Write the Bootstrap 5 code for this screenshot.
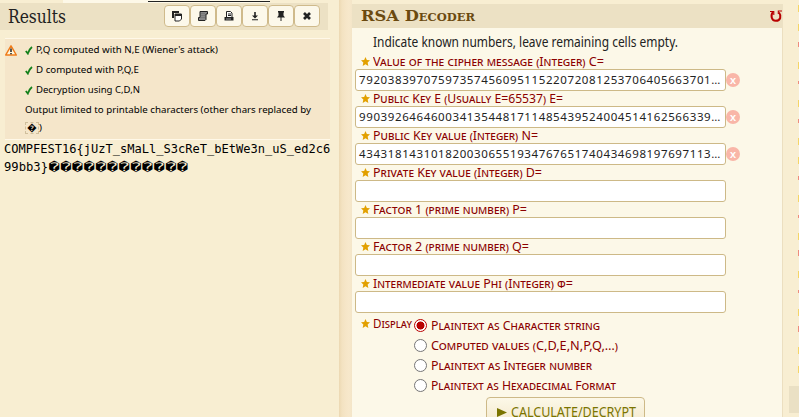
<!DOCTYPE html>
<html lang="en">
<head>
<meta charset="utf-8">
<title>RSA Decoder</title>
<link href="https://cdn.jsdelivr.net/npm/bootstrap@5.3.0/dist/css/bootstrap.min.css" rel="stylesheet">
<style>
body{width:799px;height:417px;background:#f8eed2;font-family:"Noto Sans","Open Sans",sans-serif;color:#222;line-height:1}
.fit{display:inline-block;white-space:nowrap;transform-origin:0 50%}
.side{width:339px;height:417px}
.topstrip{height:3px;margin-left:63px;width:207px;background:#fdf8e8;padding-top:1px}
.topstrip div{height:1px;width:122px;margin-left:85px;background:#222}
.res-head{width:328px;height:27px;background:#ece1c4;padding-left:8px}
.res-title{font:19px/27px "DejaVu Serif",serif;width:156px}
.tool{width:26px;height:22px;border:1px solid #cfba8b;border-radius:4px;background:#fcf8ea;padding:0;color:#222}
.tools{margin-top:2px}
.tool svg{display:block;margin:auto}
.notes{margin:8px 0 0 5px;width:325px;height:102px;background:#f5e6ca;border-top:1px solid #fff8e8;border-bottom:1px solid #fff8e8;font-size:9.8px;color:#000}
.notes svg.warn{margin:6px 0 0 0}
.note{height:20px;line-height:20px}
.note-list{padding:1px 0 0 8px}
.tick{width:11px;height:20px}
.tick svg{display:block}
.bad{border:1px dashed #d0bf9c;width:14px;height:12px}
.bad-row{padding-top:2px}
.result{font:12.05px/18px "DejaVu Sans Mono",monospace;color:#000;padding-left:4px}
.gutter{width:13px;height:417px;background:linear-gradient(90deg,#ecd8b2 0,#f3e2c1 3px,#f6e6c8 7px,#f7e8cb 10px,#f3e5c8 13px)}
.main{width:431px;height:417px}
.main-head{margin-top:4px;height:24px;background:#ece1c4;padding-left:9px}
.main-title{font:bold 15.6px/24px "DejaVu Serif",serif;font-variant:small-caps;color:#6b4a10;width:408px}
.panel{height:389px;background:#fcf8e8;border-right:1px solid #ecdfc0;padding-left:3px}
.lead-in{height:26px;line-height:28px;font-size:14px;padding-left:18px}
.lab{height:15px;line-height:15px;font-size:13px;font-variant:small-caps;color:#8b0000;padding-left:6px}
.lab svg{width:9px;height:9px;margin-right:3px;flex:none}
.field{width:371px;height:22px;border:1px solid #cdb987;border-radius:3px;background:#fff;padding-left:3px;font-size:11.5px;line-height:19px;white-space:nowrap}
.clear{width:14px;height:14px;border-radius:50%;background:#f9b6a8;color:#fff;font-weight:bold;font-size:9px}
.opts{height:82px}
.display-lab{width:59px;margin-top:3px}
.choices{padding-top:2px}
.dot{width:13px;height:13px;border:1px solid #767676;border-radius:50%;background:#fff;margin-right:4px;flex:none}
.dot.on{border:1.5px solid #b80000;background:radial-gradient(circle,#b80000 0 3.7px,#fff 4.3px)}
.choice{height:20px;font-size:13px;font-variant:small-caps;color:#8b0000}
.go{margin:2px 0 0 131px;width:159px;height:29px;border:1px solid #cdb987;border-radius:4px;background:linear-gradient(#fcf8e8,#f3e8cb);color:#7a7400;font-size:14px;padding:1px 0 0 10px}
.edge{width:16px;height:417px}
</style>
</head>
<body class="overflow-hidden">
<svg class="d-none"><symbol id="star" viewBox="0 0 20 20"><path fill="#e2a000" d="M10 0l3 6.500 7 .8-5.200 4.900L16.300 20 10 16.300 3.700 20l1.500-7.800L0 7.300l7-.8z"/></symbol>
<symbol id="check" viewBox="0 0 8 9"><path d="M.8 5l2 2.500Q4 3.500 7 1" fill="none" stroke="#13801b" stroke-width="1.800"/></symbol></svg>
<div class="d-flex">
<section class="side">
 <div class="topstrip"><div></div></div>
 <header class="res-head d-flex">
  <div class="res-title"><span class="fit" data-w="58">Results</span></div>
  <div class="tools d-flex">
   <button class="tool"><svg width="12" height="12" viewBox="0 0 12 12"><path d="M1 1h7v2H3v5H1z" fill="#222"/><path d="M4 4h6.500v5l-2 2H4z" fill="#fff" stroke="#222"/><path d="M4 4h7v2H4z" fill="#222"/></svg></button>
   <button class="tool"><svg width="12" height="12" viewBox="0 0 12 12"><path d="M3 1.500h7.500v2.500H9v5.500L8 10.500H1.500v-3H3z" fill="#888" stroke="#222"/><path d="M4 3.500h4M4 5.500h4M4 7.500h4" stroke="#777"/></svg></button>
   <button class="tool"><svg width="12" height="12" viewBox="0 0 12 12"><path d="M3.500 7V1.500h4l1.500 1.500v4" fill="#fff" stroke="#222"/><path d="M5 4h3M5 5.500h3" stroke="#222"/><path d="M1.500 7h9v3.500h-9z" fill="#222"/><path d="M3 9h5" stroke="#ccc" stroke-width=".7"/></svg></button>
   <button class="tool"><svg width="12" height="12" viewBox="0 0 12 12"><path d="M5.200 2h1.600v3.500H9L6 8.500 3 5.500h2.200zM3 9.300h6v1H3z" fill="#222"/></svg></button>
   <button class="tool"><svg width="12" height="12" viewBox="0 0 12 12"><path d="M3 1h6v1.500H8.500v3L10 7.500H6.500V11h-1V7.500H2l1.500-2v-3H3z" fill="#222"/></svg></button>
   <button class="tool"><svg width="12" height="12" viewBox="0 0 12 12"><path d="M3 3l6 6M9 3l-6 6" stroke="#222" stroke-width="2.700"/></svg></button>
  </div>
 </header>
 <div class="notes d-flex">
  <svg class="warn" width="12" height="11" viewBox="0 0 12 11"><path d="M6 .8L11.300 10H.7z" fill="#fff7dc" stroke="#ef7c1a" stroke-width="1.500" stroke-linejoin="round"/><path d="M6 3.500v3.500M6 8v1.300" stroke="#222" stroke-width="1.500"/></svg>
  <div class="note-list">
   <div class="note d-flex"><span class="tick d-flex align-items-center"><svg width="8" height="9"><use href="#check"/></svg></span><span class="fit" data-w="182">P,Q computed with N,E (Wiener's attack)</span></div>
   <div class="note d-flex"><span class="tick d-flex align-items-center"><svg width="8" height="9"><use href="#check"/></svg></span><span class="fit" data-w="103">D computed with P,Q,E</span></div>
   <div class="note d-flex"><span class="tick d-flex align-items-center"><svg width="8" height="9"><use href="#check"/></svg></span><span class="fit" data-w="104">Decryption using C,D,N</span></div>
   <div class="note"><span class="fit" data-w="286">Output limited to printable characters (other chars replaced by</span></div>
   <div class="bad-row d-flex align-items-center"><span class="bad d-flex align-items-center justify-content-center">�</span>)</div>
  </div>
 </div>
 <div class="result">COMPFEST16{jUzT_sMaLl_S3cReT_bEtWe3n_uS_ed2c6<br><span class="fit" data-w="44">99bb3}</span><span class="fit" data-w="140">������������</span></div>
</section>
<div class="gutter"></div>
<main class="main">
 <header class="main-head d-flex align-items-center">
  <div class="main-title"><span class="fit" data-w="114">RSA Decoder</span></div>
  <svg width="14" height="14" viewBox="0 0 14 14"><path d="M4.200 3C1.500 5.500 2 11.800 6.800 11.800c5 0 5.700-5 3.200-8.300" fill="none" stroke="#b80000" stroke-width="2"/><path d="M1 2.500h3.800v3.500M13 2H9.300v3" fill="none" stroke="#b80000" stroke-width="1.100"/></svg>
 </header>
 <div class="panel">
  <div class="lead-in"><span class="fit" data-w="305">Indicate known numbers, leave remaining cells empty.</span></div>
  <div class="lab d-flex align-items-center"><svg><use href="#star"/></svg><span class="fit" data-w="231">Value of the cipher message (Integer) C=</span></div>
  <div class="d-flex align-items-center"><div class="field"><span class="fit" data-w="362" data-ls>7920383970759735745609511522072081253706405663701…</span></div><div class="clear d-flex align-items-center justify-content-center">X</div></div>
  <div class="lab d-flex align-items-center"><svg><use href="#star"/></svg><span class="fit" data-w="190">Public Key E (Usually E=65537) E=</span></div>
  <div class="d-flex align-items-center"><div class="field"><span class="fit" data-w="362" data-ls>9903926464600341354481711485439524004514162566339…</span></div><div class="clear d-flex align-items-center justify-content-center">X</div></div>
  <div class="lab d-flex align-items-center"><svg><use href="#star"/></svg><span class="fit" data-w="165">Public Key value (Integer) N=</span></div>
  <div class="d-flex align-items-center"><div class="field"><span class="fit" data-w="362" data-ls>4343181431018200306551934767651740434698197697113…</span></div><div class="clear d-flex align-items-center justify-content-center">X</div></div>
  <div class="lab d-flex align-items-center"><svg><use href="#star"/></svg><span class="fit" data-w="169">Private Key value (Integer) D=</span></div>
  <div class="field"></div>
  <div class="lab d-flex align-items-center"><svg><use href="#star"/></svg><span class="fit" data-w="154">Factor 1 (prime number) P=</span></div>
  <div class="field"></div>
  <div class="lab d-flex align-items-center"><svg><use href="#star"/></svg><span class="fit" data-w="156">Factor 2 (prime number) Q=</span></div>
  <div class="field"></div>
  <div class="lab d-flex align-items-center"><svg><use href="#star"/></svg><span class="fit" data-w="200">Intermediate value Phi (Integer) φ=</span></div>
  <div class="field"></div>
  <div class="opts d-flex">
   <div class="lab display-lab d-flex align-items-center flex-shrink-0"><svg><use href="#star"/></svg><span class="fit" data-w="39">Display</span></div>
   <div class="choices">
    <div class="choice d-flex align-items-center"><span class="dot on"></span><span class="fit" data-w="169">Plaintext as Character string</span></div>
    <div class="choice d-flex align-items-center"><span class="dot"></span><span class="fit" data-w="187">Computed values (C,D,E,N,P,Q,…)</span></div>
    <div class="choice d-flex align-items-center"><span class="dot"></span><span class="fit" data-w="161">Plaintext as Integer number</span></div>
    <div class="choice d-flex align-items-center"><span class="dot"></span><span class="fit" data-w="185">Plaintext as Hexadecimal Format</span></div>
   </div>
  </div>
  <button class="go d-flex align-items-center"><svg width="14" height="11" viewBox="0 0 14 11"><path d="M0 1l10 4.500L0 10z" fill="#7a7400"/></svg><span class="fit" data-w="125">CALCULATE/DECRYPT</span></button>
 </div>
</main>
<aside class="edge"><svg class="d-block" width="16" height="417"><path d="M15.500 5v7m0 12v7m0 31v7m0 31v7m0 31v7m0 12v7m0 31v7m0 31v7m0 31v7m0 31v7m0 31v7m0 12v7" stroke="#f5d566"/><path d="M15.500 42v5m0 34v3m0 35v4m0 53v4m0 35v3m0 32v6m0 34v3m0 33v6" stroke="#ee8c7c"/><path d="M6 386h10v27H6z" fill="#eae0c4"/></svg></aside>
</div>
<script src="https://cdn.jsdelivr.net/npm/bootstrap@5.3.0/dist/js/bootstrap.bundle.min.js"></script>
<script>
// Fit each run of text to its column width, keeping the layout box in step.
document.querySelectorAll('.fit').forEach(function (el) {
  var want = +el.dataset.w, have = el.getBoundingClientRect().width;
  if ('ls' in el.dataset) {
    el.style.letterSpacing = (want - have) / el.textContent.length + 'px';
  } else {
    el.style.transform = 'scaleX(' + want / have + ')';
    el.style.marginRight = want - have + 'px';
  }
});
</script>
</body>
</html>
